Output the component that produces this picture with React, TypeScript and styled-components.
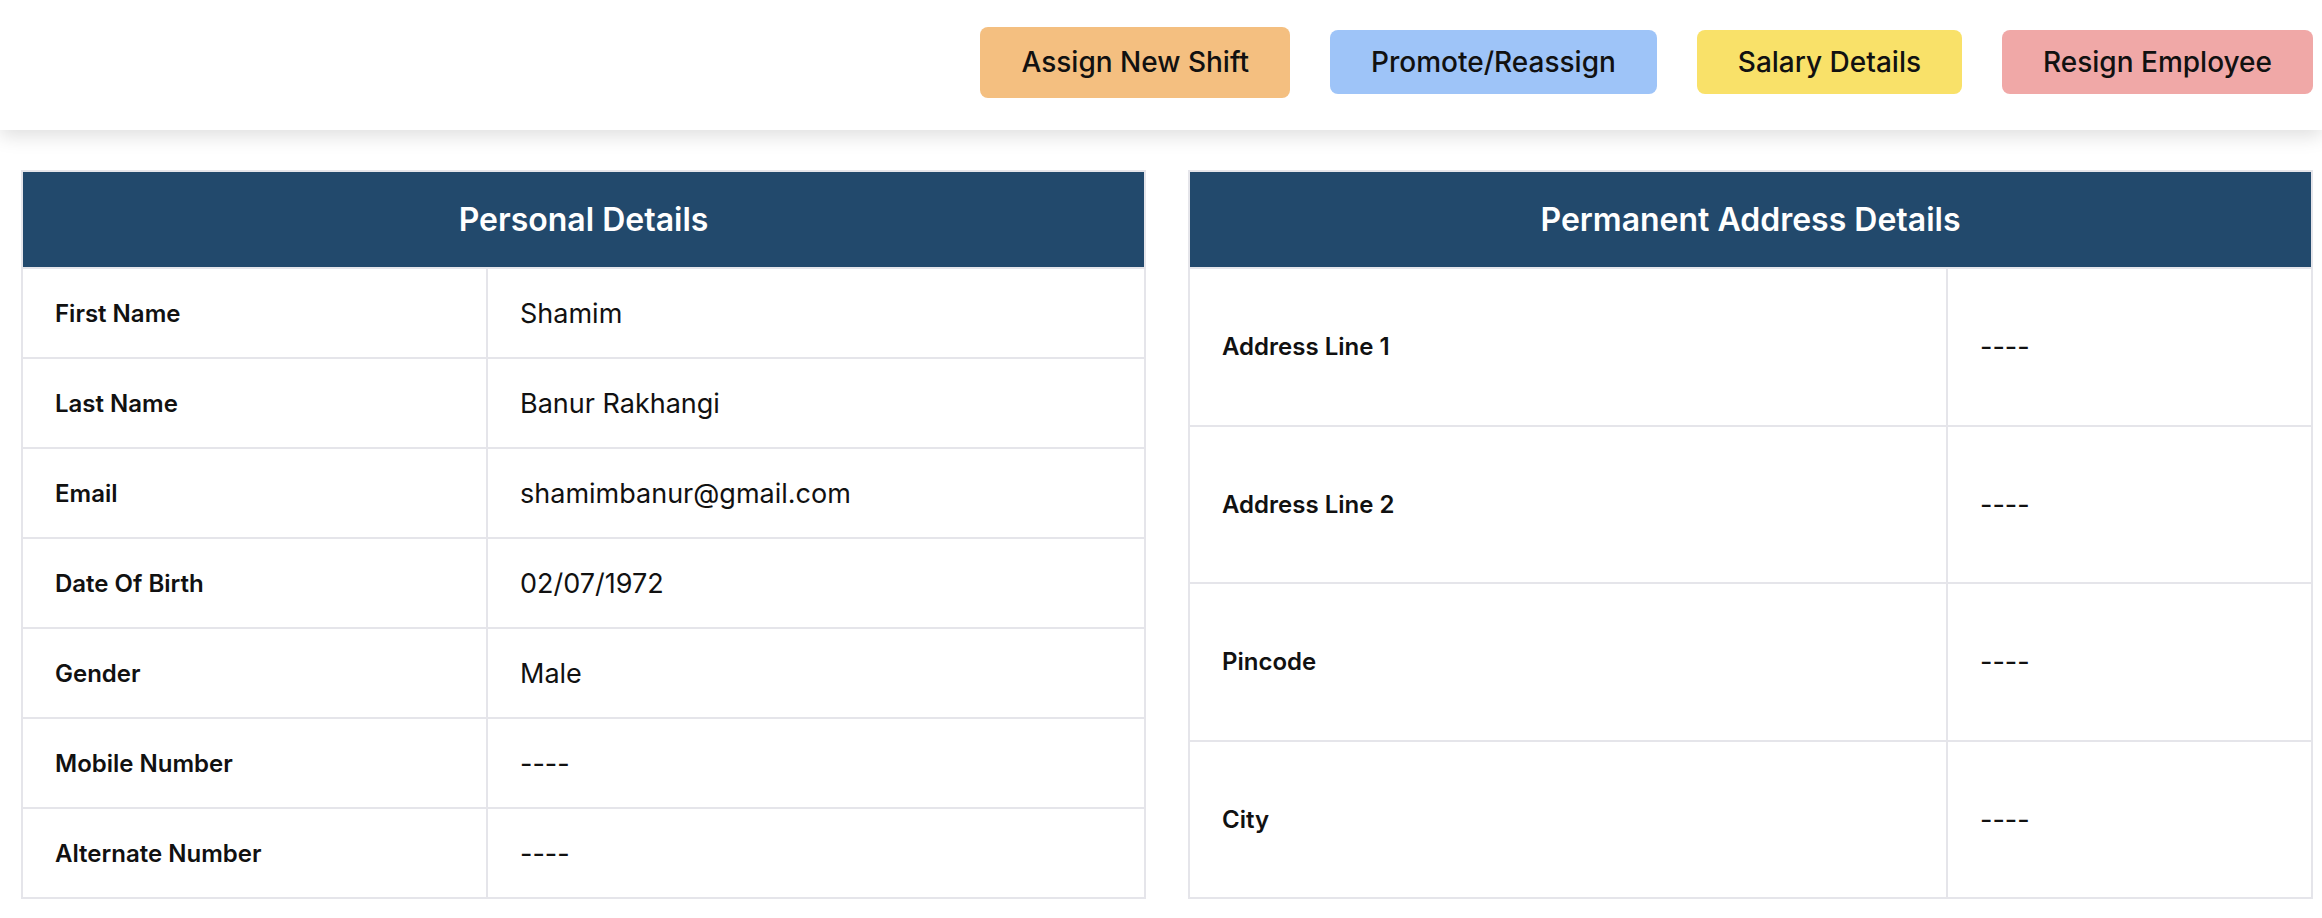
import React from 'react';
import styled, { createGlobalStyle } from 'styled-components';

const GlobalStyle = createGlobalStyle`
  html, body {
    margin: 0;
    padding: 0;
    background: #ffffff;
    font-family: Inter, "Noto Sans", "Liberation Sans", sans-serif;
    color: #111111;
  }
  * {
    box-sizing: border-box;
  }
`;

type Tone = 'orange' | 'blue' | 'yellow' | 'red';

const toneColors: Record<Tone, string> = {
  orange: '#f4bf80',
  blue: '#9ec4f8',
  yellow: '#f9e169',
  red: '#f0a8a7',
};

const actions: { label: string; tone: Tone; tall?: boolean }[] = [
  { label: 'Assign New Shift', tone: 'orange', tall: true },
  { label: 'Promote/Reassign', tone: 'blue' },
  { label: 'Salary Details', tone: 'yellow' },
  { label: 'Resign Employee', tone: 'red' },
];

const personal = [
  ['First Name', 'Shamim'],
  ['Last Name', 'Banur Rakhangi'],
  ['Email', 'shamimbanur@gmail.com'],
  ['Date Of Birth', '02/07/1972'],
  ['Gender', 'Male'],
  ['Mobile Number', '----'],
  ['Alternate Number', '----'],
];

const address = [
  ['Address Line 1', '----'],
  ['Address Line 2', '----'],
  ['Pincode', '----'],
  ['City', '----'],
];

function DetailsTable(props: { title: string; rows: string[][]; labelWidth: number }) {
  const { title, rows, labelWidth } = props;
  return (
    <Panel>
      <Table>
        <colgroup>
          <col style={{ width: labelWidth }} />
          <col />
        </colgroup>
        <thead>
          <tr>
            <HeadCell colSpan={2}>{title}</HeadCell>
          </tr>
        </thead>
        <tbody>
          {rows.map(([label, value]) => (
            <Row key={label}>
              <LabelCell>{label}</LabelCell>
              <ValueCell>{value}</ValueCell>
            </Row>
          ))}
        </tbody>
      </Table>
    </Panel>
  );
}

export default function App() {
  return (
    <>
      <GlobalStyle />
      <TopBar>
        {actions.map((a) => (
          <ActionButton key={a.label} $tone={a.tone} $tall={a.tall}>
            {a.label}
          </ActionButton>
        ))}
      </TopBar>
      <Content>
        <DetailsTable title="Personal Details" rows={personal} labelWidth={465} />
        <DetailsTable title="Permanent Address Details" rows={address} labelWidth={758} />
      </Content>
    </>
  );
}

const TopBar = styled.header`
  height: 130px;
  display: flex;
  justify-content: flex-end;
  align-items: center;
  gap: 40px;
  padding: 0 9px 6px 0;
  background: #ffffff;
  box-shadow: 0 6px 18px rgba(0, 0, 0, 0.13);
  position: relative;
  z-index: 1;
`;

const ActionButton = styled.button<{ $tone: Tone; $tall?: boolean }>`
  border: none;
  border-radius: 8px;
  background: ${(p) => toneColors[p.$tone]};
  color: #111111;
  font-family: Inter, "Noto Sans", "Liberation Sans", sans-serif;
  font-size: 28px;
  font-weight: 500;
  line-height: 40px;
  padding: ${(p) => (p.$tall ? '15px 41px 16px' : '12px 41px')};
  cursor: pointer;
`;

const Content = styled.main`
  display: grid;
  grid-template-columns: 1fr 1fr;
  gap: 42px;
  padding: 40px 9px 0 21px;
`;

const Panel = styled.section`
  display: flex;
  flex-direction: column;
`;

const Table = styled.table`
  width: 100%;
  height: 100%;
  border-collapse: collapse;
  table-layout: fixed;
  border: 2px solid #e5e5ea;
`;

const HeadCell = styled.th`
  height: 97px;
  background: #22496c;
  color: #ffffff;
  font-size: 32px;
  font-weight: 600;
  text-align: center;
  border: 2px solid #e5e5ea;
`;

const Row = styled.tr`
  height: 90px;
`;

const LabelCell = styled.td`
  padding: 0 32px;
  font-size: 24px;
  font-weight: 600;
  color: #111111;
  border: 2px solid #e5e5ea;
  vertical-align: middle;
`;

const ValueCell = styled.td`
  padding: 0 32px;
  font-size: 27px;
  font-weight: 400;
  color: #111111;
  border: 2px solid #e5e5ea;
  vertical-align: middle;
`;
